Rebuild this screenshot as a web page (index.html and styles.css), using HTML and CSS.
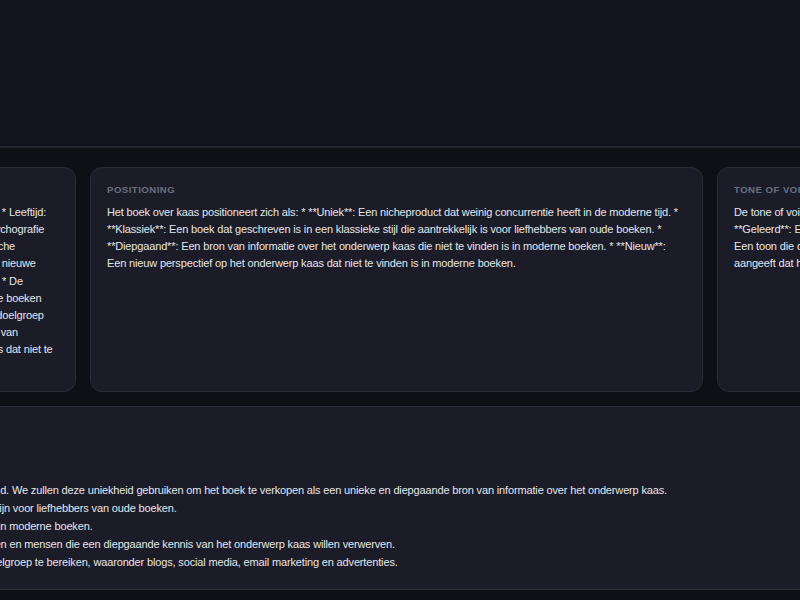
FILE: index.html
```html
<!DOCTYPE html>
<html lang="nl">
<head>
<meta charset="utf-8">
<title>Boek over kaas – strategie</title>
<link rel="stylesheet" href="styles.css">
</head>
<body>
<header class="topbar"></header>
<main class="board">
  <section class="cards">
    <article class="card">
      <h3 class="card-label">Doelgroep</h3>
      <p class="card-text">Doelgroep voor het boek over kaas kan als volgt worden omschreven: * Geslacht: Zowel mannen als vrouwen * Leeftijd:<br>Volwassenen tussen de 30 en 70 jaar oud * Opleiding: Hoger opgeleid en vaak geïnteresseerd in cultuur * Psychografie<br>**: Mensen die houden van kaas, wijn, koken en lekker eten en die ook al interesse hebben in de gastronomische<br>geschiedenis van Europa * Gedrag: Lezers die vaak graag oude boeken lezen en ook graag op zoek zijn naar nieuwe<br>kennis over het onderwerp kaas * Interesses: Kaas, wijn, koken, reizen, lezen, natuur, geschiedenis en cultuur * De<br>doelgroep is vooral graag op zoek naar een mooi boek dat een klassieke stijl heeft, zoals die van de vele, oude boeken<br>uit vroegere tijden. * Het boek is daarmee tevens ook zeer interessant voor een veel bredere en vaak grotere doelgroep<br>van verzamelaars en ook liefhebbers van oude boeken. * De lezers zijn vaak al graag op zoek naar informatie van<br>hoge en uitstekende kwaliteit en willen nu graag een geheel nieuw origineel perspectief op het onderwerp kaas dat niet te<br>vinden is in moderne boeken.</p>
    </article>
    <article class="card">
      <h3 class="card-label">Positioning</h3>
      <p class="card-text">Het boek over kaas positioneert zich als: * **Uniek**: Een nicheproduct dat weinig concurrentie heeft in de moderne tijd. * **Klassiek**: Een boek dat geschreven is in een klassieke stijl die aantrekkelijk is voor liefhebbers van oude boeken. * **Diepgaand**: Een bron van informatie over het onderwerp kaas die niet te vinden is in moderne boeken. * **Nieuw**: Een nieuw perspectief op het onderwerp kaas dat niet te vinden is in moderne boeken.</p>
    </article>
    <article class="card">
      <h3 class="card-label">Tone of voice</h3>
      <p class="card-text">De tone of voice van het boek is: * **Formeel**: Een toon die past bij een klassiek boek. *<br>**Geleerd**: Een toon die de kennis van de auteur over het onderwerp kaas weerspiegelt. * **Informatief**:<br>Een toon die de lezer voorziet van informatie die niet te vinden is in moderne boeken. * **Nostalgisch**: Een toon die<br>aangeeft dat het boek geïnspireerd is door oude boeken.</p>
    </article>
  </section>
  <section class="panel">
    <h3 class="card-label">Marketingstrategie</h3>
    <div class="panel-lines">
      <p>Marketingplan voor het boek over kaas:</p>
      <p>Onze aanpak bestaat uit de volgende</p>
      <p>vijf onderdelen:</p>
      <p>Uniek: Het boek heeft weinig concurrentie in de moderne tijd. We zullen deze uniekheid gebruiken om het boek te verkopen als een unieke en diepgaande bron van informatie over het onderwerp kaas.</p>
      <p>Stijl: Het boek kent een klassieke stijl die aantrekkelijk zal zijn voor liefhebbers van oude boeken.</p>
      <p>Inhoud: Het biedt informatie over kaas die niet te vinden is in moderne boeken.</p>
      <p>Doelgroep: Kaasliefhebbers, koks, chefs, historici, studenten en mensen die een diepgaande kennis van het onderwerp kaas willen verwerven.</p>
      <p>Kanalen: We gebruiken al verschillende kanalen om de doelgroep te bereiken, waaronder blogs, social media, email marketing en advertenties.</p>
    </div>
  </section>
</main>
</body>
</html>
```

FILE: styles.css
```css
* { box-sizing: border-box; }

html, body { margin: 0; padding: 0; }

body {
  width: 800px;
  height: 600px;
  overflow: hidden;
  background: #0f1016;
  color: #e5e7eb;
  font-family: "Liberation Sans", Arial, sans-serif;
  font-size: 11px;
  letter-spacing: -0.15px;
}

.topbar {
  height: 148px;
  background: #12131b;
  border-bottom: 2px solid #24252e;
}

.board {
  width: 1867px;
  margin-left: -537px;
  padding-top: 19px;
  display: flex;
  flex-direction: column;
  gap: 14px;
}

.cards {
  display: flex;
  gap: 14px;
}

.card {
  flex: 0 0 613px;
  background: #1b1c27;
  border: 1px solid #2a2c38;
  border-radius: 12px;
  padding: 16px 18px 16px 16px;
}

.card-label {
  margin: 0 0 8px;
  font-size: 9.6px;
  line-height: 12px;
  letter-spacing: 0.05em;
  text-transform: uppercase;
  font-weight: 600;
  color: #6b7080;
}

.card-text {
  margin: 0;
  font-size: 11px;
  line-height: 17.125px;
}

.panel {
  background: #1b1c27;
  border: 1px solid #2a2c38;
  border-radius: 12px;
  padding: 20px 16px 18px;
  display: grid;
  grid-template-columns: 225px 1fr;
  column-gap: 16px;
}

.panel-lines p {
  margin: 0;
  white-space: nowrap;
  font-size: 11px;
  line-height: 18px;
}
```
